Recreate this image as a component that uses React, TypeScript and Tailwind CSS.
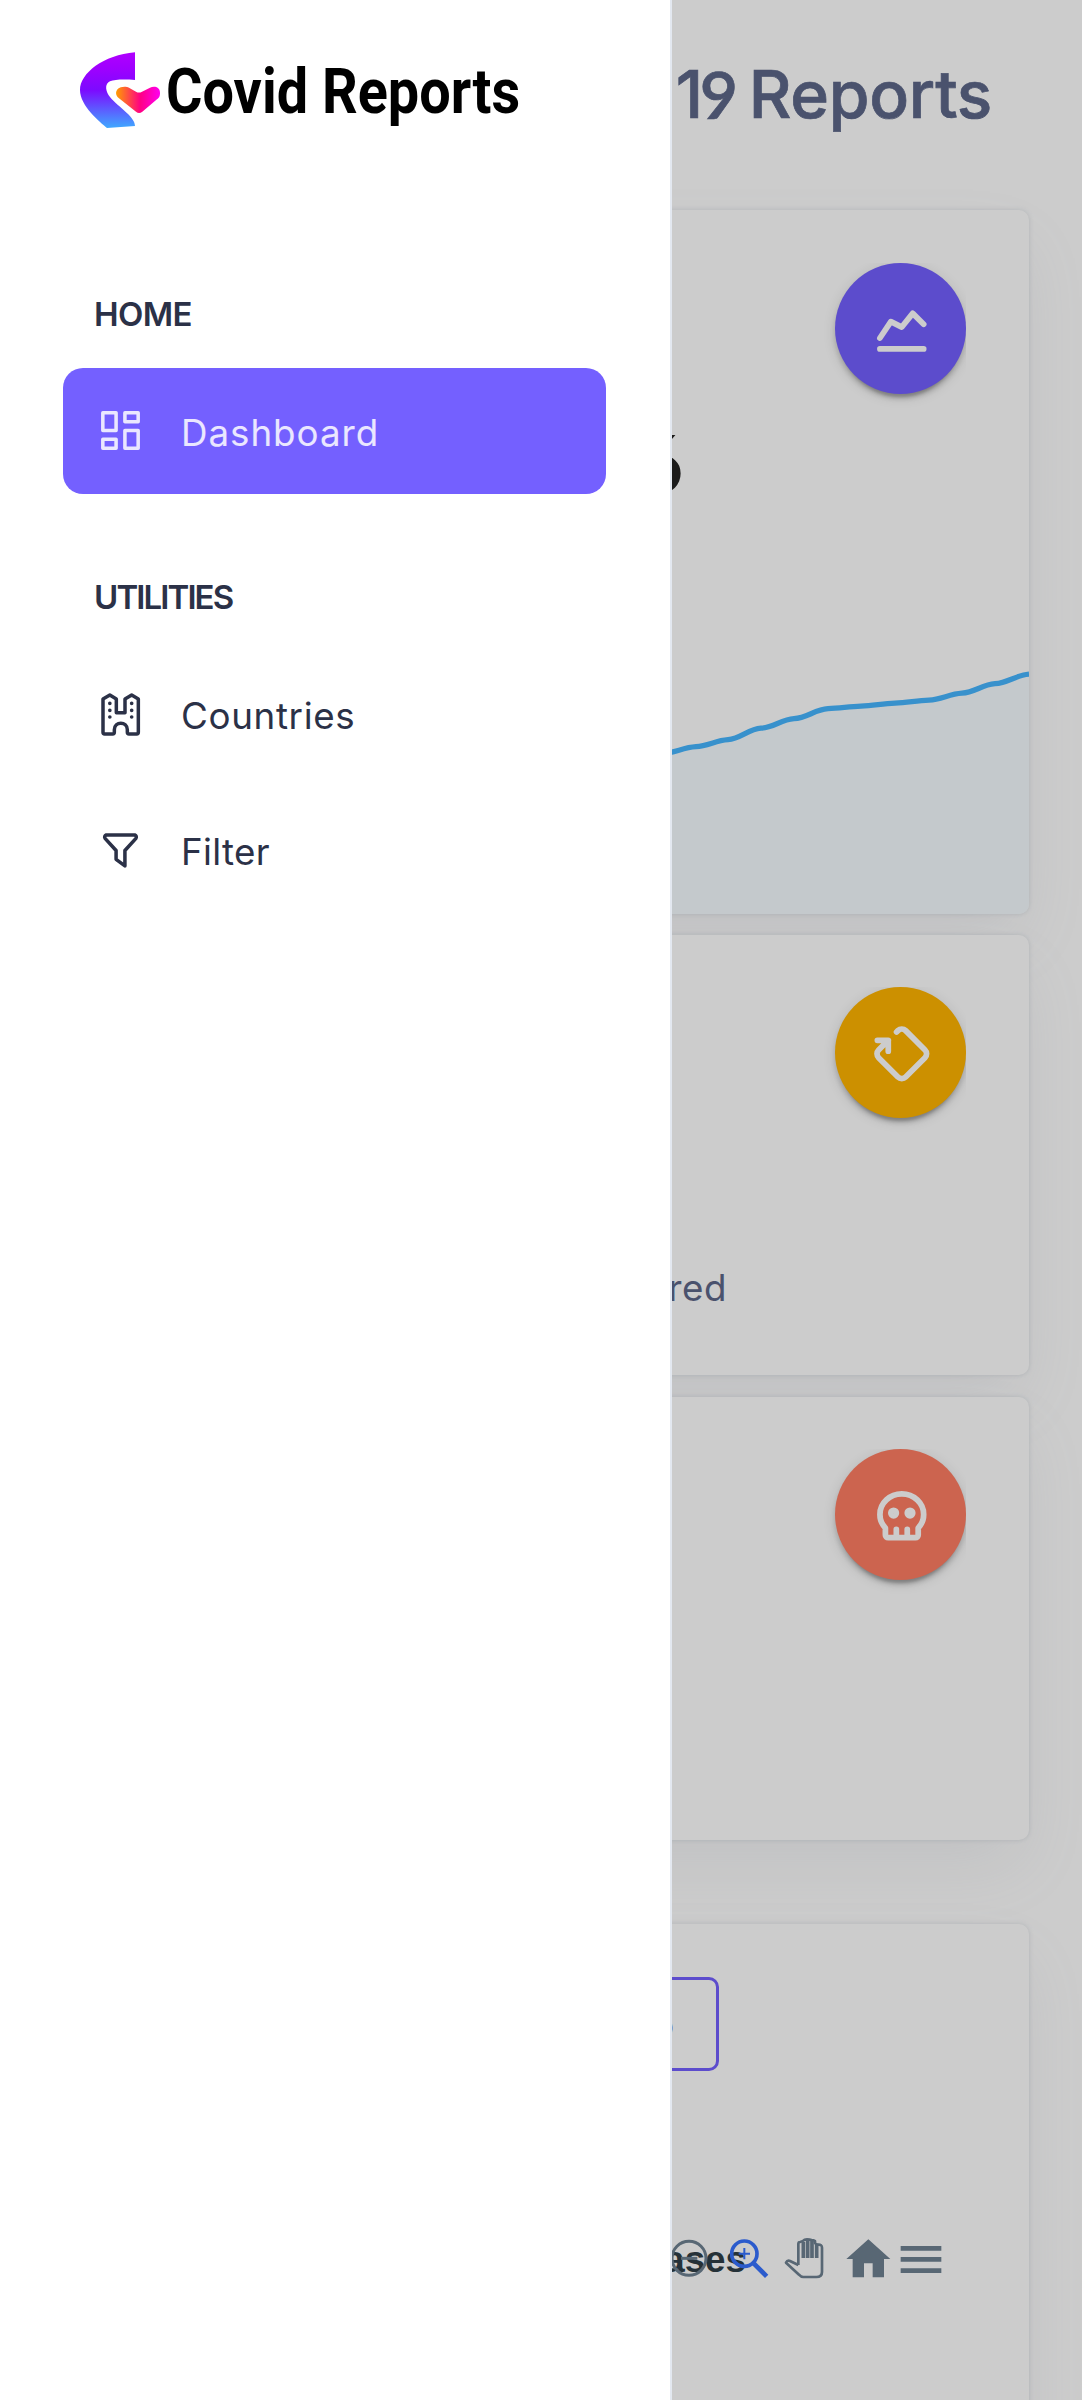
import React from "react";
import type { ReactNode } from "react";

const strokeProps = {
  fill: "none",
  stroke: "currentColor",
  strokeLinecap: "round" as const,
  strokeLinejoin: "round" as const,
};

function LogoMark() {
  return (
    <svg viewBox="57 60 246 240" className="h-20 w-[82px] shrink-0">
      <defs>
        <linearGradient id="swoosh" x1="0" y1="0" x2="0" y2="1">
          <stop offset="0" stopColor="#b000ff" />
          <stop offset="0.2" stopColor="#a000ff" />
          <stop offset="0.5" stopColor="#7c0aff" />
          <stop offset="1" stopColor="#3fa9ff" />
        </linearGradient>
        <linearGradient id="heart" x1="0" y1="0" x2="1" y2="0">
          <stop offset="0" stopColor="#ff9d00" />
          <stop offset="0.55" stopColor="#ff0084" />
          <stop offset="1" stopColor="#ff00f0" />
        </linearGradient>
      </defs>
      <path
        fill="url(#swoosh)"
        d="M225 67V150C200 148 165 147 150 154C136 161 135 178 146 196C165 225 225 258 225 288L141 294C120 276 60 228 60 180C60 130 130 75 225 67Z"
      />
      <path
        fill="url(#heart)"
        d="M174 176C180 170 198 168 207 173L228 185Q237 190 246 185L270 173C282 167 300 170 300 188C300 199 298 202 291 208L247 245Q237 253 228 245L176 204C166 195 166 184 174 176Z"
      />
    </svg>
  );
}

function DashboardIcon() {
  return (
    <svg viewBox="0 0 24 24" className="size-[53px] shrink-0" strokeWidth="1.6" {...strokeProps}>
      <path d="M4 4h6v8h-6zM4 16h6v4h-6zM14 12h6v8h-6zM14 4h6v4h-6z" />
    </svg>
  );
}

function CastleIcon() {
  return (
    <svg viewBox="102 82 159 159" className="size-[53px] shrink-0" strokeWidth="10.5" {...strokeProps}>
      <path d="M129 115L149.500 103L169 115V156H195V115L215 103L235 115V215Q235 220 230 220H207Q202 220 202 215V207C202 181 163 181 163 207V215Q163 220 158 220H134Q129 220 129 215Z" />
      <path d="M149.500 128v.1M149.500 149v.1M149.500 169v.1M215 128v.1M215 149v.1M215 169v.1" strokeWidth="11" />
    </svg>
  );
}

function FilterIcon() {
  return (
    <svg viewBox="0 0 24 24" className="size-[53px] shrink-0" strokeWidth="1.6" {...strokeProps}>
      <path d="M5.500 5h13a1 1 0 0 1 .5 1.500l-5 5.500v7l-4 -3v-4l-5 -5.500a1 1 0 0 1 .5 -1.500" />
    </svg>
  );
}

function StatIcon({ tone, children }: { tone: string; children: ReactNode }) {
  return (
    <div className="flex justify-end overflow-hidden pb-8">
      <div
        className={`flex size-[131px] items-center justify-center rounded-full pt-[3px] pl-[3px] text-white shadow-[0_8px_3px_-5px_rgba(0,0,0,0.2),0_5px_5px_0_rgba(0,0,0,0.14),0_3px_13px_0_rgba(0,0,0,0.12)] ${tone}`}
      >
        <svg viewBox="0 0 24 24" className="size-[65.6px]" strokeWidth="2.1" {...strokeProps}>
          {children}
        </svg>
      </div>
    </div>
  );
}

function Card({ className, children }: { className: string; children: ReactNode }) {
  return (
    <section
      className={`flex shrink-0 flex-col overflow-hidden rounded-[10px] bg-white pt-[52.5px] shadow-[0_0_5px_0_rgba(145,158,171,0.3),0_31px_63px_-10px_rgba(145,158,171,0.13)] ${className}`}
    >
      {children}
    </section>
  );
}

const trend = [
  [600, 109], [640, 100], [672, 89], [706, 82], [738, 75], [771, 63.5], [804, 54], [838, 44], [871, 41.5],
  [905, 38.5], [939, 35.5], [972, 28.5], [1005, 19], [1039, 9.5],
].map(([x, y]) => [x - 63, y + 0.7]);

function TrendChart() {
  let line = "M0 190L510 118";
  let [px, py] = [510, 118];
  for (const [x, y] of trend) {
    const h = (x - px) * 0.38;
    line += `C${px + h} ${py - 0.8} ${x - h} ${y + 0.8} ${x} ${y}`;
    [px, py] = [x, y];
  }
  return (
    <svg viewBox="0 0 976 250" className="mt-auto block h-[250px] w-[976px]">
      <path d={`${line}V250H0Z`} fill="#f5fcff" />
      <path d={line} fill="none" stroke="#46b6ff" strokeWidth="5.3" />
    </svg>
  );
}

function ChartToolbar() {
  return (
    <div className="flex items-center justify-end text-[#6e8192]">
      <svg viewBox="90 78 120 132" className="h-11 w-10" fill="none" stroke="currentColor" strokeWidth="9">
        <circle cx="147" cy="145" r="51" />
        <path d="M123 145h49" strokeWidth="9" />
      </svg>
      <svg viewBox="264 78 126 132" className="ml-[18px] h-11 w-[42px] text-[#3672ff]" fill="none" stroke="currentColor">
        <circle cx="313" cy="131" r="38" strokeWidth="11" />
        <path d="M313 114v34M296 131h34" strokeWidth="6" />
        <path d="M338 157L380 199" strokeWidth="14" />
      </svg>
      <svg viewBox="428 78 126 132" className="ml-[13px] h-11 w-[42px]" fill="none" stroke="currentColor" strokeWidth="8" strokeLinejoin="round">
        <path d="M474 165V102Q474 96 479 96Q486 95 489 92Q492 88 500 88Q509 88 513 90Q520 90 524 93V99Q526 104 533 104Q545 103 545 113V186Q545 201 528 201H489Q482 201 476 194L437 158Q441 150 449 153L474 165" />
        <path d="M489 96v48M502 90v54M515 92v52M529 104v40" strokeWidth="11" />
      </svg>
      <svg viewBox="614 78 138 132" className="ml-5 h-11 w-[46px]" fill="currentColor">
        <path d="M684 88L750 147H731V202H697V160H671V202H637V147H618Z" />
      </svg>
      <svg viewBox="776 78 132 132" className="ml-2 size-11" stroke="currentColor" strokeWidth="14">
        <path d="M781 115h122M781 148h122M781 182h122" />
      </svg>
    </div>
  );
}

function NavHeading({ className, children }: { className: string; children: ReactNode }) {
  return <h2 className={`pl-[31px] text-[33px] leading-[42px] font-semibold ${className}`}>{children}</h2>;
}

function NavItem({ icon, className, label }: { icon: ReactNode; className: string; label: ReactNode }) {
  return (
    <a className={`flex h-[126px] items-center rounded-[20px] pl-[31px] text-[36.75px] ${className}`}>
      {icon}
      <span className="ml-[34px] pt-1">{label}</span>
    </a>
  );
}

function Sidebar() {
  return (
    <aside className="absolute inset-y-0 left-0 flex w-[672px] flex-col border-r-2 border-[#e3e8f0] bg-white pr-16 pl-[63px] text-[#2b3147]">
      <div className="mt-[50px] ml-4 flex h-20 items-start">
        <LogoMark />
        <span className="mt-[7px] ml-[5px] origin-left scale-x-[0.886] font-['Roboto',sans-serif] text-[63px] leading-[70px] font-bold whitespace-nowrap text-black">
          Covid Reports
        </span>
      </div>
      <NavHeading className="mt-[163px] tracking-[-0.6px]">HOME</NavHeading>
      <NavItem
        className="mt-[32.5px] bg-[#7460ff] text-white/85"
        icon={<DashboardIcon />}
        label={<span className="tracking-[0.95px]">Dashboard</span>}
      />
      <NavHeading className="mt-[82.5px] tracking-[-1.9px]">UTILITIES</NavHeading>
      <NavItem
        className="mt-[33px]"
        icon={<CastleIcon />}
        label={<span className="tracking-[0.65px]">Countries</span>}
      />
      <NavItem className="mt-[10px]" icon={<FilterIcon />} label={<span className="tracking-[0.35px]">Filter</span>} />
    </aside>
  );
}

export default function App() {
  return (
    <div className="relative h-[2400px] w-[1082px] overflow-hidden bg-white font-['Inter',sans-serif]">
      <main className="flex h-full flex-col px-[53px]">
        <h1 className="flex h-[210px] shrink-0 justify-end pt-[54px] pr-[37px] text-[66px] leading-[80px] font-medium tracking-[-0.3px] whitespace-pre text-[#5d6789] [-webkit-text-stroke:0.7px_#5d6789]">
          Covid 1<span className="mr-[11px] -ml-[3px] font-['Lato',sans-serif] font-semibold">9</span>Reports
        </h1>

        <Card className="h-[703.5px]">
          <div className="flex flex-col px-[63px]">
            <StatIcon tone="bg-[#7460ff]">
              <path d="M4 19h16M4 15l4 -6l4 2l4 -5l4 4" />
            </StatIcon>
            <p className="mr-[283px] text-right font-['Lato',sans-serif] text-[80px] leading-[72px] font-black text-[#222]">
              704753886
            </p>
          </div>
          <TrendChart />
        </Card>

        <Card className="mt-[21px] h-[440.5px] px-[63px]">
          <StatIcon tone="bg-[#ffb400]">
            <path d="M10.090 4.010l.496 -.495a2 2 0 0 1 2.828 0l7.071 7.070a2 2 0 0 1 0 2.830l-7.070 7.070a2 2 0 0 1 -2.830 0l-7.070 -7.070a2 2 0 0 1 0 -2.830l3.535 -3.535h-3.988M7.050 11.038v-3.988" />
          </StatIcon>
          <p className="mt-[114px] mr-[239px] text-right text-[36.75px] leading-[48px] tracking-[0.5px] text-[#5d6789]">
            Total Recovered
          </p>
        </Card>

        <Card className="mt-[21.5px] h-[443.5px] px-[63px]">
          <StatIcon tone="bg-[#ff7e63]">
            <path d="M12 4c4.418 0 8 3.358 8 7.500c0 1.901 -.755 3.637 -2 4.960v2.540a1 1 0 0 1 -1 1h-10a1 1 0 0 1 -1 -1v-2.540c-1.245 -1.322 -2 -3.058 -2 -4.960c0 -4.142 3.582 -7.500 8 -7.500zM10 17v3M14 17v3" />
            <circle cx="9" cy="11" r="1" />
            <circle cx="15" cy="11" r="1" />
          </StatIcon>
        </Card>

        <Card className="mt-[84px] h-[700px]">
          <div className="mr-[310px] flex h-[94px] items-center justify-end self-end rounded-[10px] border-3 border-[#7460ff] pt-1 pr-[42px] pl-12 text-[33px] text-[#7460ff]">
            Morocco
          </div>
          <div className="mt-[165px] grid pr-[86px]">
            <h3 className="col-start-1 row-start-1 mr-[197px] text-right font-['Liberation_Sans',sans-serif] text-[36.75px] leading-[47px] font-bold text-[#2f3e46]">
              Total Cases
            </h3>
            <div className="col-start-1 row-start-1">
              <ChartToolbar />
            </div>
          </div>
        </Card>
      </main>

      <div className="absolute inset-0 bg-black/20" />
      <Sidebar />
    </div>
  );
}
